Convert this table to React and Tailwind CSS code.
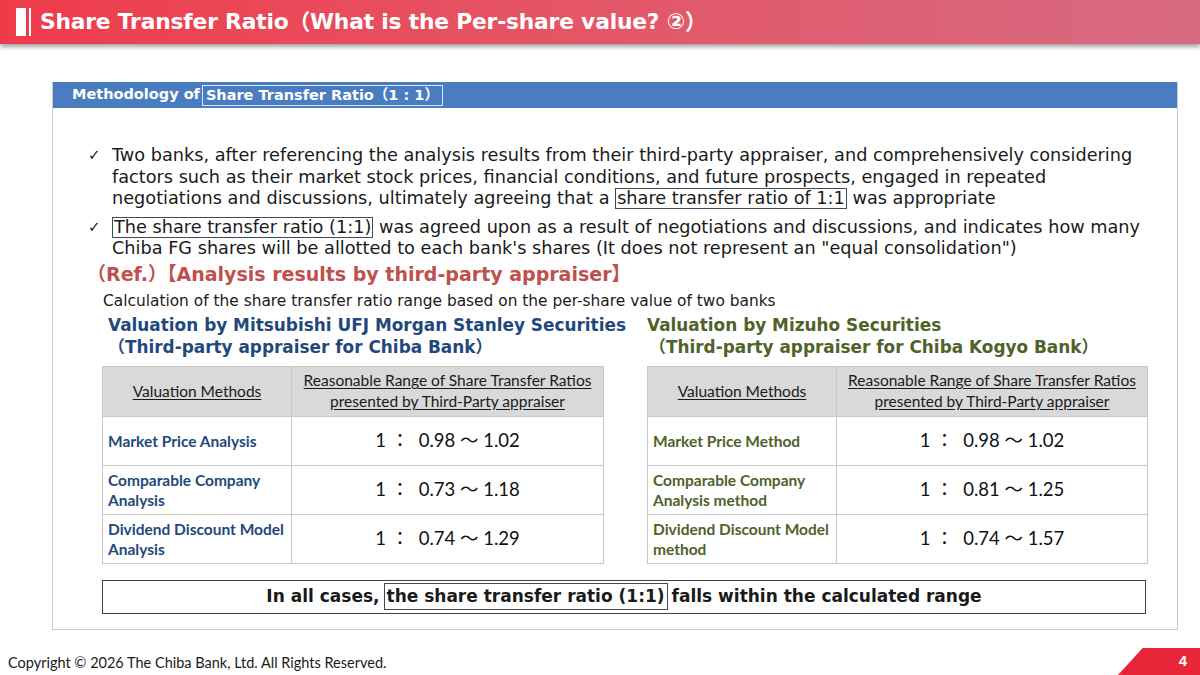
import React from "react";

const leftRows = [
  ["Market Price Analysis", "0.98", "1.02"],
  ["Comparable Company Analysis", "0.73", "1.18"],
  ["Dividend Discount Model Analysis", "0.74", "1.29"],
];

const rightRows = [
  ["Market Price Method", "0.98", "1.02"],
  ["Comparable Company Analysis method", "0.81", "1.25"],
  ["Dividend Discount Model method", "0.74", "1.57"],
];

const meiryo = "font-['DejaVu_Sans','Noto_Sans_CJK_JP',sans-serif]";
const calibri = "font-['Lato','Noto_Sans_CJK_JP',sans-serif]";

function RatioTable({ rows, labelColor, width }) {
  return (
    <div className={`${width} border border-[#c8c8c8] ${calibri}`}>
      <div className="grid grid-cols-[189px_1fr] h-[49px] bg-[#d9d9d9] text-[#1a1a1a] text-[15.5px] leading-[21px] text-center">
        <div className="flex items-center justify-center border-r border-[#c8c8c8]">
          <span className="underline underline-offset-2">Valuation Methods</span>
        </div>
        <div className="flex items-center justify-center">
          <span className="underline underline-offset-2">
            Reasonable Range of Share Transfer Ratios
            <br />
            presented by Third-Party appraiser
          </span>
        </div>
      </div>
      {rows.map(([label, lo, hi]) => (
        <div
          key={label}
          className="grid grid-cols-[189px_1fr] h-[49px] bg-white border-t border-[#c8c8c8]"
        >
          <div
            className={`flex items-center px-[5px] border-r border-[#c8c8c8] text-[15.5px] leading-[20px] font-bold ${labelColor}`}
          >
            {label}
          </div>
          <div className="flex items-center justify-center text-[18.5px] text-[#111] whitespace-pre">
            {"1 ：  " + lo + " ～ " + hi}
          </div>
        </div>
      ))}
    </div>
  );
}

export default function App() {
  return (
    <div className="w-[1200px] h-[675px] bg-white relative overflow-hidden">
      {/* title bar */}
      <div className="h-[44px] bg-gradient-to-r from-[#ef3a4a] to-[#d76a82] shadow-[0_3px_4px_rgba(0,0,0,0.35)] flex items-center pl-[16px]">
        <div className="w-[10px] h-[28px] bg-white" />
        <div className="w-[2px] h-[28px] bg-white ml-[3px]" />
        <h1 className={`ml-[9px] text-white text-[21.8px] font-bold tracking-[-0.2px] ${meiryo}`}>
          Share Transfer Ratio（What is the Per-share value? ②）
        </h1>
      </div>

      {/* panel */}
      <div className="mt-[38px] ml-[52px] w-[1126px] h-[548px] border border-[#c9c9c9] border-t-0">
        <div className={`h-[26px] bg-[#4a7cc0] flex items-center pl-[19px] text-white text-[14.5px] font-bold ${meiryo}`}>
          Methodology of
          <span className="ml-[2px] px-[3px] border border-[#dde6f3] leading-[19px]">
            Share Transfer Ratio（1 : 1）
          </span>
        </div>

        <div className={`pl-[35px] pt-[37px] text-[#1a1a1a] text-[17.7px] leading-[21.5px] ${meiryo}`}>
          <div className="flex">
            <span className="w-[24px] shrink-0 text-[15px]">✓</span>
            <p className="w-[1045px]">
              Two banks, after referencing the analysis results from their third-party appraiser, and comprehensively considering factors such as their market stock prices, financial conditions, and future prospects, engaged in repeated negotiations and discussions, ultimately agreeing that a{" "}
              <span className="inline-block border border-[#3b4a5c] px-[1px] leading-[19px]">share transfer ratio of 1:1</span> was appropriate
            </p>
          </div>
          <div className="flex mt-[7px]">
            <span className="w-[24px] shrink-0 text-[15px]">✓</span>
            <p className="w-[1045px]">
              <span className="inline-block border border-[#3b4a5c] px-[1px] leading-[19px]">The share transfer ratio (1:1)</span> was agreed upon as a result of negotiations and discussions, and indicates how many Chiba FG shares will be allotted to each bank's shares (It does not represent an "equal consolidation")
            </p>
          </div>
        </div>

        <div className={`pl-[34px] mt-[1px] text-[#c0504d] text-[19px] leading-[26px] font-bold ${meiryo}`}>
          （Ref.）【Analysis results by third-party appraiser】
        </div>
        <div className={`pl-[50px] mt-[4px] text-[#1a1a1a] text-[15.4px] leading-[20px] ${meiryo}`}>
          Calculation of the share transfer ratio range based on the per-share value of two banks
        </div>

        <div className={`flex mt-[3px] pl-[55px] text-[16.9px] leading-[22px] font-bold ${meiryo}`}>
          <div className="w-[539px] text-[#1f497d]">
            Valuation by Mitsubishi UFJ Morgan Stanley Securities
            <br />
            （Third-party appraiser for Chiba Bank）
          </div>
          <div className="text-[#4f6228]">
            Valuation by Mizuho Securities
            <br />
            <span className="ml-[2px]">（Third-party appraiser for Chiba Kogyo Bank）</span>
          </div>
        </div>

        <div className="flex pl-[49px] gap-[43px] mt-[8px]">
          <RatioTable rows={leftRows} labelColor="text-[#1f497d]" width="w-[502px]" />
          <RatioTable rows={rightRows} labelColor="text-[#4f6228]" width="w-[501px]" />
        </div>

        <div className={`ml-[49px] mt-[16px] w-[1044px] h-[34px] border border-[#404040] flex items-center justify-center text-[17px] font-bold text-[#1a1a1a] ${meiryo}`}>
          In all cases,
          <span className="ml-[4px] mr-[4px] px-[2px] border border-[#3b4a5c] leading-[25px]">
            the share transfer ratio (1:1)
          </span>
          falls within the calculated range
        </div>
      </div>

      {/* footer */}
      <div className={`absolute left-[8px] top-[652px] text-[14.5px] text-[#1a1a1a] ${calibri}`}>
        Copyright © 2026 The Chiba Bank, Ltd. All Rights Reserved.
      </div>
      <div className="absolute right-0 bottom-0 w-[82px] h-[27px] bg-[#e8263a] [clip-path:polygon(30%_0,100%_0,100%_100%,0_100%)] flex items-center justify-end pr-[13px] text-white text-[15px] font-bold font-['Liberation_Sans',sans-serif]">
        4
      </div>
    </div>
  );
}
